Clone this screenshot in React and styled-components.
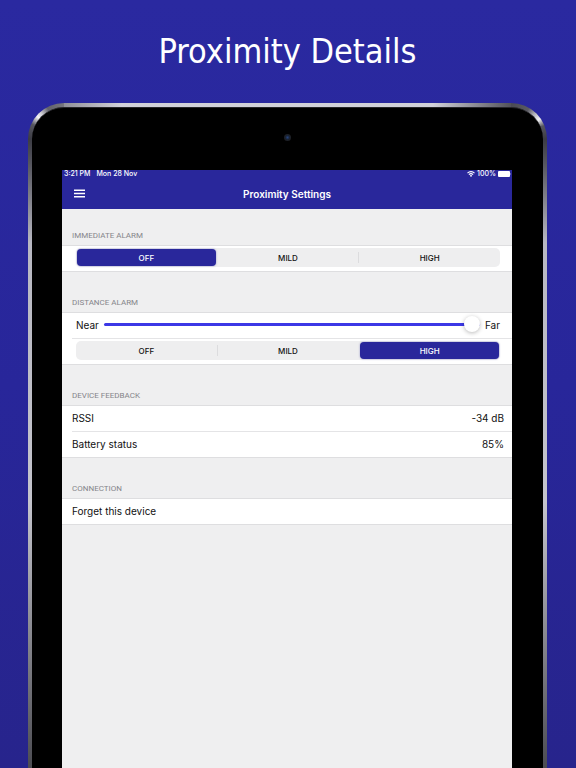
import React, { useState } from 'react';
import styled, { createGlobalStyle } from 'styled-components';

const GlobalStyle = createGlobalStyle`
  *, *::before, *::after { box-sizing: border-box; }
  body { margin: 0; background: #272590; }
  button, input { font: inherit; margin: 0; }
`;

const Page = styled.div`
  min-height: 100vh;
  display: flex;
  flex-direction: column;
  padding: 0 29px 0 28px;
  background: linear-gradient(#2a29a0, #28269a 50%, #27248c);
  font-family: Inter, "Liberation Sans", sans-serif;
  color: #111;
`;

const Title = styled.h1`
  margin: 0;
  height: 103px;
  line-height: 103px;
  text-align: center;
  font-family: "DejaVu Sans Condensed", "Noto Sans", sans-serif;
  font-size: 34px;
  font-weight: 400;
  color: #fff;
`;

const Frame = styled.div`
  flex: 1;
  display: flex;
  padding: 4px 4px 0;
  border-radius: 36px 36px 0 0;
  background:
    conic-gradient(from 270deg at 100% 100%, #3c3c44, #55555e 25deg, #f4f4f6 40deg, #d0d0d6 48deg, #62626a 62deg, #77777f 90deg) 0 0 / 36px 36px no-repeat,
    conic-gradient(from 0deg at 0 100%, #4a4a52, #5a5a62 30deg, #b8b8be 44deg, #f4f4f6 55deg, #55555e 68deg, #3c3c44 90deg) 100% 0 / 36px 36px no-repeat,
    linear-gradient(90deg, #66666e, #d2d2da 18%, #d2d2da 78%, #4a4a52 94%) 0 0 / 100% 4px no-repeat,
    linear-gradient(#3c3c44 36px, #55555e 60px, #b8b8c2 140px, #c4c4cc 60%, #88888f 80%, #4c4c52);
`;

const Bezel = styled.div`
  flex: 1;
  min-width: 0;
  display: flex;
  flex-direction: column;
  padding: 0 31px 0 30px;
  border: 1px solid #26262a;
  border-width: 1px 0 0;
  border-radius: 32px 32px 0 0;
  background: #000;
`;

const CameraBar = styled.div`
  height: 62px;
  display: flex;
  justify-content: center;
  align-items: center;
  padding-bottom: 4px;
`;

const Camera = styled.span`
  width: 7px;
  height: 7px;
  border-radius: 50%;
  background: radial-gradient(#24427c, #18202e 45%, #202022 75%);
`;

const Screen = styled.main`
  flex: 1;
  background: #efeff0;
`;

const TopBar = styled.header`
  height: 39px;
  background: #29279b;
  color: #fff;
`;

const StatusBar = styled.div`
  height: 8px;
  display: flex;
  align-items: center;
  gap: 6px;
  padding: 0 1px 0 2px;
  font-size: 7px;
  line-height: 8px;
  font-weight: 500;
`;

const StatusRight = styled.div`
  display: flex;
  align-items: center;
  gap: 2px;
  margin-left: auto;
`;

const NavBar = styled.div`
  height: 31px;
  display: grid;
  grid-template-columns: 30px 1fr 30px;
  align-items: center;
  padding: 0 2px;
`;

const MenuButton = styled.button`
  display: flex;
  justify-content: center;
  padding: 4px 0;
  border: 0;
  background: none;
  color: #fff;
`;

const NavTitle = styled.h2`
  margin: 0;
  text-align: center;
  font-size: 10px;
  line-height: 16px;
  font-weight: 600;
`;

const SectionTitle = styled.h3`
  margin: 0;
  height: ${({ $first }) => ($first ? 36 : 40)}px;
  display: flex;
  align-items: flex-end;
  padding: 0 10px 3px;
  font-family: Roboto, Inter, sans-serif;
  font-size: 8px;
  line-height: 12px;
  font-weight: 400;
  color: #85858a;
`;

const Card = styled.div`
  border: 1px solid #dedee0;
  border-width: 1px 0;
  background: #fff;
`;

const Divider = styled.div`
  height: 1px;
  margin-left: 10px;
  background: #e4e4e6;
`;

const ControlRow = styled.div`
  height: 25px;
  display: flex;
  align-items: center;
  gap: 5px;
  padding: 0 12px 2px 14px;
  font-size: 10px;
  line-height: 16px;
`;

const ValueRow = styled.div`
  height: 25px;
  display: flex;
  align-items: center;
  justify-content: space-between;
  padding: 0 8px 2px 10px;
  font-size: 10px;
  line-height: 16px;
`;

const ActionRow = styled.button`
  width: 100%;
  height: 25px;
  display: block;
  padding: 0 10px 2px;
  border: 0;
  background: none;
  text-align: left;
  color: inherit;
  && { font-size: 10px; line-height: 16px; }
`;

const Segments = styled.div`
  flex: 1;
  display: grid;
  grid-template-columns: repeat(3, 1fr);
  gap: 3px;
  height: 19px;
  padding: 1px;
  border-radius: 5px;
  background: #eeeeef;
`;

const Segment = styled.button`
  padding: 0;
  border: 0;
  border-radius: 4px;
  background: ${({ $active }) => ($active ? '#29279b' : 'transparent')};
  color: ${({ $active }) => ($active ? '#fff' : '#111')};
  box-shadow: ${({ $active }) => ($active ? '0 0 2px rgba(41, 39, 155, 0.5)' : 'none')};
  && { font-size: 8px; line-height: 16px; font-weight: 500; }
`;

const SegmentSlot = styled.div`
  display: grid;
  position: relative;
  &::before {
    content: '';
    display: ${({ $rule }) => ($rule ? 'block' : 'none')};
    position: absolute;
    left: -2px;
    top: 3px;
    bottom: 3px;
    width: 1px;
    background: #dcdcde;
  }
`;

const Slider = styled.input`
  flex: 1;
  min-width: 0;
  height: 22px;
  appearance: none;
  background: transparent;
  &::-webkit-slider-runnable-track {
    height: 3px;
    border-radius: 2px;
    background: #3c38e6;
  }
  &::-webkit-slider-thumb {
    appearance: none;
    width: 16px;
    height: 16px;
    margin-top: -7px;
    border-radius: 50%;
    background: #fff;
    box-shadow: 0 1px 4px rgba(0, 0, 0, 0.28);
  }
`;

const LEVELS = ['OFF', 'MILD', 'HIGH'];

function LevelPicker({ label, initial }) {
  const [value, setValue] = useState(initial);
  const selected = LEVELS.indexOf(value);
  return (
    <Segments role="group" aria-label={label}>
      {LEVELS.map((level, i) => (
        <SegmentSlot key={level} $rule={i > 0 && i !== selected && i - 1 !== selected}>
          <Segment
            type="button"
            $active={level === value}
            aria-pressed={level === value}
            onClick={() => setValue(level)}
          >
            {level}
          </Segment>
        </SegmentSlot>
      ))}
    </Segments>
  );
}

function WifiIcon() {
  return (
    <svg width="8" height="6" viewBox="0 0 16 12" fill="none" stroke="currentColor" strokeWidth="2.2" aria-hidden="true">
      <path d="M1 4.2a10 10 0 0 1 14 0" />
      <path d="M3.8 7.2a6 6 0 0 1 8.4 0" />
      <path d="M8 12 5.6 9.4a3.4 3.4 0 0 1 4.8 0Z" fill="currentColor" stroke="none" />
    </svg>
  );
}

function BatteryIcon() {
  return (
    <svg width="13" height="6" viewBox="0 0 13 6" aria-hidden="true">
      <rect x="0" y="0" width="12" height="6" rx="1" fill="currentColor" />
      <path d="M12.4 2v2q.6-.2.6-1t-.6-1Z" fill="currentColor" opacity="0.6" />
    </svg>
  );
}

function MenuIcon() {
  return (
    <svg width="11" height="9" viewBox="0 0 11 9" stroke="currentColor" strokeWidth="1.4" aria-hidden="true">
      <path d="M0 1.2h11M0 4.5h11M0 7.8h11" />
    </svg>
  );
}

export default function App() {
  const [distance, setDistance] = useState(100);
  return (
    <>
      <GlobalStyle />
      <Page>
        <Title>Proximity Details</Title>
        <Frame>
          <Bezel>
            <CameraBar><Camera /></CameraBar>
            <Screen>
              <TopBar>
                <StatusBar>
                  <span>3:21 PM</span>
                  <span>Mon 28 Nov</span>
                  <StatusRight>
                    <WifiIcon />
                    <span>100%</span>
                    <BatteryIcon />
                  </StatusRight>
                </StatusBar>
                <NavBar>
                  <MenuButton type="button" aria-label="Menu"><MenuIcon /></MenuButton>
                  <NavTitle>Proximity Settings</NavTitle>
                </NavBar>
              </TopBar>

              <SectionTitle $first>IMMEDIATE ALARM</SectionTitle>
              <Card>
                <ControlRow><LevelPicker label="Immediate alarm" initial="OFF" /></ControlRow>
              </Card>

              <SectionTitle>DISTANCE ALARM</SectionTitle>
              <Card>
                <ControlRow>
                  <label htmlFor="distance">Near</label>
                  <Slider
                    id="distance"
                    type="range"
                    min="0"
                    max="100"
                    value={distance}
                    onChange={(e) => setDistance(Number(e.target.value))}
                  />
                  <span>Far</span>
                </ControlRow>
                <Divider />
                <ControlRow><LevelPicker label="Distance alarm" initial="HIGH" /></ControlRow>
              </Card>

              <SectionTitle>DEVICE FEEDBACK</SectionTitle>
              <Card>
                <ValueRow><span>RSSI</span><span>-34 dB</span></ValueRow>
                <Divider />
                <ValueRow><span>Battery status</span><span>85%</span></ValueRow>
              </Card>

              <SectionTitle>CONNECTION</SectionTitle>
              <Card>
                <ActionRow type="button">Forget this device</ActionRow>
              </Card>
            </Screen>
          </Bezel>
        </Frame>
      </Page>
    </>
  );
}
